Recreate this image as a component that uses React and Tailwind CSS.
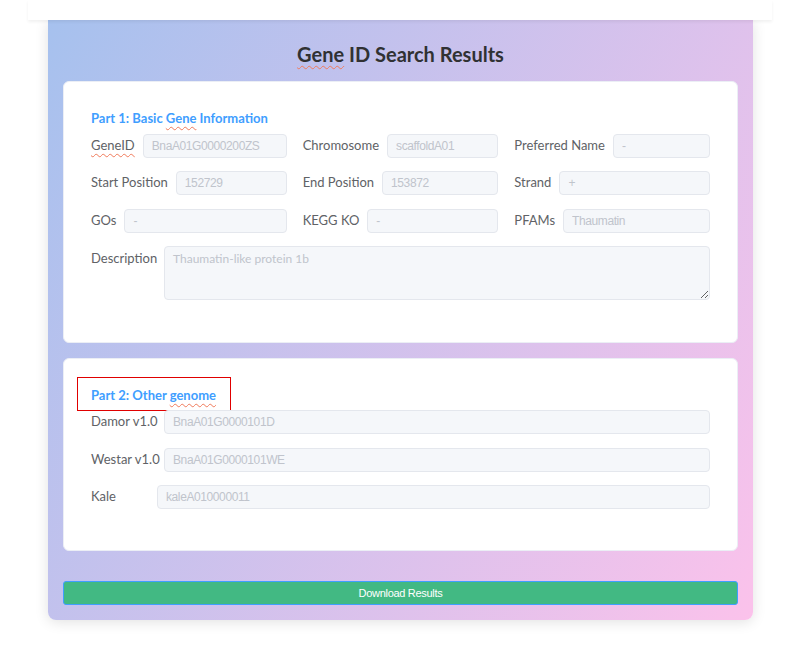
import React from 'react';

const field =
  'h-[24px] w-full min-w-0 flex-1 rounded-[4px] border border-[#e4e7ed] bg-[#f5f7fa] px-2 text-[12px] tracking-[-0.4px] text-[#c0c4cc] outline-none';
const valueFont = { fontFamily: '"Liberation Sans", Arial, sans-serif' };

const Typo = ({ children }) => (
  <span className="underline decoration-wavy decoration-[#f07a5a] decoration-1 underline-offset-[3px]">
    {children}
  </span>
);

const Field = ({ label, value }) => (
  <div className="flex items-center gap-[8px]">
    <span className="whitespace-nowrap text-[13px] text-[#606266]">{label}</span>
    <input readOnly value={value} className={field} style={valueFont} />
  </div>
);

const basicRows = [
  [
    [<Typo key="g">GeneID</Typo>, 'BnaA01G0000200ZS'],
    ['Chromosome', 'scaffoldA01'],
    ['Preferred Name', '-'],
  ],
  [
    ['Start Position', '152729'],
    ['End Position', '153872'],
    ['Strand', '+'],
  ],
  [
    ['GOs', '-'],
    ['KEGG KO', '-'],
    ['PFAMs', 'Thaumatin'],
  ],
];

const otherGenomes = [
  ['Damor v1.0', 'BnaA01G0000101D', 'w-[64px]'],
  ['Westar v1.0', 'BnaA01G0000101WE', 'w-[64px]'],
  ['Kale', 'kaleA010000011', 'w-[57px]'],
];

export default function App() {
  return (
    <div className="min-h-screen bg-white" style={{ fontFamily: 'Lato, "Noto Sans", sans-serif' }}>
      <div className="ml-[28px] w-[744px]">
        {/* top bar */}
        <div className="relative z-10 h-[20px] bg-white shadow-[0_2px_3px_rgba(0,0,0,0.06)]" />

        <div className="mx-[20px] w-[705px] rounded-b-[8px] bg-linear-[120deg] from-[#a6c1ee] to-[#fbc2eb] px-[15px] pb-[15px] shadow-[0_2px_14px_rgba(0,0,0,0.12)]">
          <h1 className="pt-[20px] text-center text-[20px] font-bold leading-[28px] text-[#303133]">
            <Typo>Gene</Typo> ID Search Results
          </h1>

          {/* Part 1 */}
          <div className="mt-[13px] rounded-[6px] border border-[#ebeef5] bg-white px-[27px] pt-[26px] pb-[42px]">
            <h2 className="text-[13px] font-bold leading-[20px] text-[#409eff]">
              Part 1: Basic <Typo>Gene</Typo> Information
            </h2>
            <div className="mt-[6px] flex flex-col gap-[13px]">
              {basicRows.map((row, i) => (
                <div key={i} className={`grid grid-cols-3 gap-x-4 ${i === 2 ? 'mt-px' : ''}`}>
                  {row.map(([label, value], j) => (
                    <Field key={j} label={label} value={value} />
                  ))}
                </div>
              ))}
              <div className="flex items-start gap-[9px]">
                <span className="w-[64px] shrink-0 whitespace-nowrap text-[13px] leading-[24px] text-[#606266]">
                  Description
                </span>
                <textarea
                  readOnly
                  value="Thaumatin-like protein 1b"
                  className="h-[54px] flex-1 rounded-[4px] border border-[#e4e7ed] bg-[#f5f7fa] px-2 py-[3px] text-[12px] leading-[18px] text-[#c0c4cc] outline-none"
                />
              </div>
            </div>
          </div>

          {/* Part 2 */}
          <div className="mt-[15px] rounded-[6px] border border-[#ebeef5] bg-white px-[27px] pt-[18px] pb-[41px]">
            <div className="-ml-[14px] -mb-px flex h-[34px] w-[154px] items-center border border-[#e00000] pl-[13px] pt-[2px]">
              <h2 className="text-[13px] font-bold leading-[20px] text-[#409eff]">
                Part 2: Other <Typo>genome</Typo>
              </h2>
            </div>
            <div className="flex flex-col gap-[14px]">
              {otherGenomes.map(([label, value, w], i) => (
                <div key={i} className={`flex items-center gap-[9px] ${i === 2 ? '-mt-px' : ''}`}>
                  <span className={`${w} shrink-0 whitespace-nowrap text-[13px] text-[#606266]`}>{label}</span>
                  <input readOnly value={value} className={field} style={valueFont} />
                </div>
              ))}
            </div>
          </div>

          <button
            className="mt-[30px] flex h-[24px] w-full items-center justify-center rounded-[3px] border border-[#409eff] bg-[#42b983] text-[11px] tracking-[-0.3px] text-white"
            style={valueFont}
          >
            Download Results
          </button>
        </div>
      </div>
    </div>
  );
}
